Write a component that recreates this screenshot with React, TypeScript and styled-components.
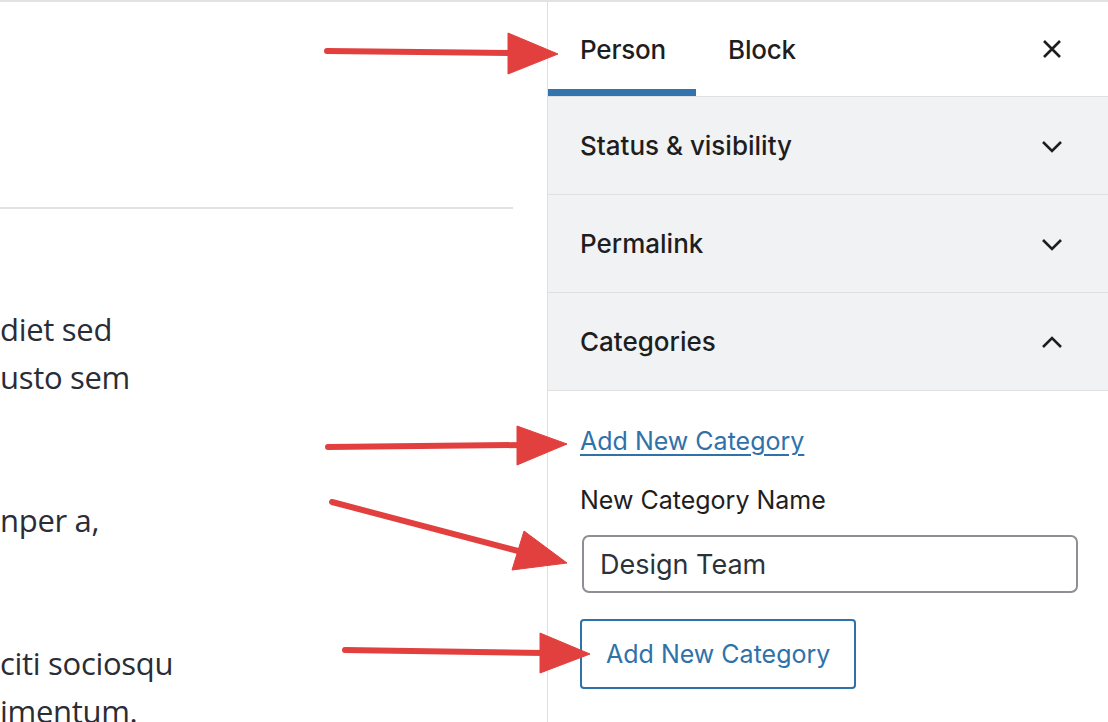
import React from "react";
import styled, { createGlobalStyle } from "styled-components";

const GlobalStyle = createGlobalStyle`
  html, body {
    margin: 0;
    padding: 0;
    background: #fff;
  }
  body {
    width: 1108px;
    height: 722px;
    overflow: hidden;
  }
`;

const UI_FONT = `Inter, "Noto Sans", "Liberation Sans", sans-serif`;

const Page = styled.div`
  position: relative;
  width: 1108px;
  height: 722px;
  display: flex;
  border-top: 2px solid #e2e2e2;
  box-sizing: border-box;
  overflow: hidden;
`;

const Canvas = styled.div`
  flex: 1;
  display: flex;
  flex-direction: column;
  padding-top: 205px;
  overflow: hidden;
`;

const Divider = styled.hr`
  margin: 0 34px 0 0;
  border: 0;
  border-top: 2px solid #e2e2e2;
`;

const Paragraphs = styled.div`
  display: flex;
  flex-direction: column;
  gap: 95px;
  padding-top: 96px;
  font-family: "Open Sans", Lato, sans-serif;
  font-size: 31px;
  font-weight: 500;
  line-height: 48px;
  letter-spacing: -0.3px;
  color: #2a2d35;
  white-space: nowrap;
`;

const Para = styled.p`
  margin: 0;
`;

const Sidebar = styled.aside`
  width: 560px;
  flex: none;
  border-left: 1px solid #e0e0e0;
  display: flex;
  flex-direction: column;
  font-family: ${UI_FONT};
  color: #1e1e1e;
`;

const Header = styled.div`
  height: 94px;
  display: flex;
  align-items: stretch;
  border-bottom: 1px solid #e0e0e0;
`;

const Tab = styled.div<{ $active?: boolean }>`
  display: flex;
  align-items: center;
  padding: 0 30px 0 32px;
  font-size: 26px;
  font-weight: 500;
  letter-spacing: -0.2px;
  box-shadow: ${p => (p.$active ? "inset 0 -7px 0 #3373ae" : "none")};
`;

const CloseButton = styled.div`
  margin-left: auto;
  width: 112px;
  display: flex;
  align-items: center;
  justify-content: center;
`;

const PanelRow = styled.div`
  box-sizing: border-box;
  height: 98px;
  display: flex;
  align-items: center;
  justify-content: space-between;
  padding: 0 45px 0 32px;
  background: #f1f2f4;
  border-bottom: 1px solid #e0e0e0;
  font-size: 26px;
  font-weight: 500;
  &:last-of-type {
    border-bottom: 0;
  }
`;

const PanelBody = styled.div`
  display: flex;
  flex-direction: column;
  align-items: flex-start;
  padding: 35px 30px 0 32px;
`;

const Link = styled.a`
  font-size: 25px;
  color: #2f72aa;
  text-decoration: underline;
  text-underline-offset: 4px;
  line-height: 30px;
`;

const Label = styled.label`
  margin-top: 29px;
  font-size: 25px;
  line-height: 30px;
  color: #1e1e1e;
`;

const TextInput = styled.div`
  margin-top: 20px;
  margin-left: 2px;
  box-sizing: border-box;
  width: 496px;
  height: 58px;
  border: 2px solid #8c8f94;
  border-radius: 7px;
  display: flex;
  align-items: center;
  padding-left: 16px;
  font-size: 27px;
  color: #2c3338;
`;

const Button = styled.div`
  margin-top: 26px;
  box-sizing: border-box;
  height: 70px;
  padding: 0 24px;
  border: 2px solid #2f72aa;
  border-radius: 4px;
  display: flex;
  align-items: center;
  font-size: 25px;
  color: #2f72aa;
`;

const Annotations = styled.svg`
  position: absolute;
  left: 0;
  top: 0;
  pointer-events: none;
`;

const Chevron = ({ up }: { up?: boolean }) => (
  <svg width="22" height="14" viewBox="0 0 22 14">
    <path
      d={up ? "M2 12 L11 3 L20 12" : "M2 3 L11 12 L20 3"}
      fill="none"
      stroke="#1e1e1e"
      strokeWidth="2.6"
    />
  </svg>
);

const arrows = [
  { tail: [327, 49], neck: [515, 51], head: "508,31 558,52 508,72" },
  { tail: [328, 445], neck: [522, 443], head: "517,424 567,442 517,463" },
  { tail: [332, 500], neck: [522, 550], head: "524,529 567,561 512,568" },
  { tail: [345, 648], neck: [545, 651], head: "540,631 590,652 540,671" },
];

export default function App() {
  return (
    <>
      <GlobalStyle />
      <Page>
        <Canvas>
          <Divider />
          <Paragraphs>
            <Para>
              diet sed
              <br />
              usto sem
            </Para>
            <Para>nper a,</Para>
            <Para>
              citi sociosqu
              <br />
              imentum.
            </Para>
          </Paragraphs>
        </Canvas>
        <Sidebar>
          <Header>
            <Tab $active>Person</Tab>
            <Tab>Block</Tab>
            <CloseButton>
              <svg width="22" height="22" viewBox="0 0 22 22">
                <path d="M3 3 L19 19 M19 3 L3 19" stroke="#1e1e1e" strokeWidth="2.6" />
              </svg>
            </CloseButton>
          </Header>
          <PanelRow>
            Status &amp; visibility
            <Chevron />
          </PanelRow>
          <PanelRow>
            Permalink
            <Chevron />
          </PanelRow>
          <PanelRow>
            Categories
            <Chevron up />
          </PanelRow>
          <PanelBody>
            <Link>Add New Category</Link>
            <Label>New Category Name</Label>
            <TextInput>Design Team</TextInput>
            <Button>Add New Category</Button>
          </PanelBody>
        </Sidebar>
        <Annotations width="1108" height="722" viewBox="0 0 1108 722">
          {arrows.map((a, i) => (
            <g key={i} fill="#e2403f" stroke="#e2403f">
              <line
                x1={a.tail[0]}
                y1={a.tail[1]}
                x2={a.neck[0]}
                y2={a.neck[1]}
                strokeWidth="6"
                strokeLinecap="round"
              />
              <polygon points={a.head} strokeWidth="1" strokeLinejoin="round" />
            </g>
          ))}
        </Annotations>
      </Page>
    </>
  );
}
